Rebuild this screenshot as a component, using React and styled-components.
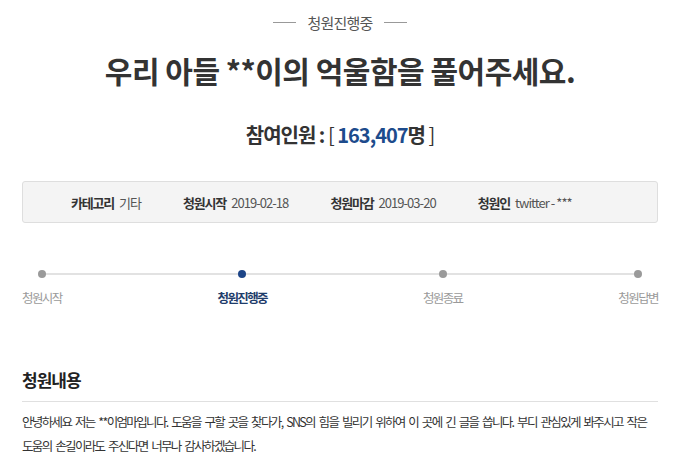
import React from 'react';
import styled, { createGlobalStyle } from 'styled-components';

const GlobalStyle = createGlobalStyle`
	body {
		margin: 0;
		background: #fff;
		font-family: "Noto Sans CJK KR", "Noto Sans", sans-serif;
		color: #333;
	}
`;

const steps = [
	{ label: '청원시작', active: false },
	{ label: '청원진행중', active: true },
	{ label: '청원종료', active: false },
	{ label: '청원답변', active: false }
];

const info = [
	{ label: '카테고리', value: '기타' },
	{ label: '청원시작', value: '2019-02-18' },
	{ label: '청원마감', value: '2019-03-20' },
	{ label: '청원인', value: 'twitter - ***' }
];

const App = () => {
	return (
		<Page>
			<GlobalStyle />

			<Status>
				<Dash />
				<span>청원진행중</span>
				<Dash />
			</Status>

			<Title>우리 아들 **이의 억울함을 풀어주세요.</Title>

			<Count>
				참여인원 : <Bracket>[</Bracket> <Number>163,407</Number>명 <Bracket>]</Bracket>
			</Count>

			<InfoBox>
				{info.map(item => (
					<InfoItem key={item.label}>
						<InfoLabel>{item.label}</InfoLabel>
						<InfoValue>{item.value}</InfoValue>
					</InfoItem>
				))}
			</InfoBox>

			<Progress>
				{steps.map(step => (
					<Step key={step.label}>
						<Dot active={step.active} />
						<StepLabel active={step.active}>{step.label}</StepLabel>
					</Step>
				))}
			</Progress>

			<Heading>청원내용</Heading>
			<Body>
				안녕하세요 저는 **이엄마입니다. 도움을 구할 곳을 찾다가, SNS의 힘을 빌리기 위하여 이 곳에 긴 글을 씁니다. 부디 관심있게 봐주시고 작은 도움의 손길이라도 주신다면 너무나 감사하겠습니다.
			</Body>
		</Page>
	);
};

export default App;

const Page = styled.div`
	padding: 0 22px;
	display: flex;
	flex-direction: column;
`

const Status = styled.div`
	margin-top: 12px;
	height: 20px;
	display: flex;
	justify-content: center;
	align-items: center;
	gap: 11px;
	font-size: 15px;
	letter-spacing: -0.8px;
	color: #555;
`

const Dash = styled.span`
	width: 23px;
	height: 1px;
	background: #999;
`

const Title = styled.h1`
	margin: 18px 0 0;
	height: 40px;
	line-height: 40px;
	text-align: center;
	font-size: 30px;
	font-weight: 700;
	letter-spacing: -0.5px;
	color: #333;
`

const Count = styled.div`
	margin-top: 31px;
	line-height: 28px;
	text-align: center;
	font-size: 20px;
	font-weight: 700;
	letter-spacing: -1px;
	color: #333;
`

const Bracket = styled.span`
	font-weight: 400;
`

const Number = styled.span`
	color: #1d4b8c;
`

const InfoBox = styled.div`
	margin-top: 32px;
	height: 42px;
	box-sizing: border-box;
	background: #f4f4f4;
	border: 1px solid #dedede;
	border-radius: 3px;
	display: flex;
	align-items: center;
	padding-left: 48px;
	gap: 42px;
`

const InfoItem = styled.div`
	display: flex;
	align-items: center;
	gap: 5px;
	font-size: 13px;
`

const InfoLabel = styled.span`
	font-weight: 700;
	letter-spacing: -1.2px;
	color: #333;
`

const InfoValue = styled.span`
	color: #555;
	letter-spacing: -0.95px;
`

const Progress = styled.div`
	position: relative;
	margin-top: 47px;
	display: flex;
	justify-content: space-between;

	&::before {
		content: '';
		position: absolute;
		top: 3px;
		left: 20px;
		right: 20px;
		height: 2px;
		background: #e2e2e2;
	}
`

const Step = styled.div`
	position: relative;
	display: flex;
	flex-direction: column;
	align-items: center;
	gap: 11px;
`

const Dot = styled.span`
	width: 8px;
	height: 8px;
	border-radius: 50%;
	background: ${props => props.active ? '#1d4587' : '#9a9a9a'};
`

const StepLabel = styled.span`
	line-height: 18px;
	font-size: 12.5px;
	letter-spacing: -1.6px;
	font-weight: ${props => props.active ? 700 : 400};
	color: ${props => props.active ? '#1f3d6b' : '#9a9a9a'};
`

const Heading = styled.h2`
	margin: 61px 0 0;
	padding-bottom: 9px;
	line-height: 24px;
	font-size: 17px;
	font-weight: 700;
	letter-spacing: -1px;
	color: #222;
	border-bottom: 1px solid #e0e0e0;
`

const Body = styled.p`
	margin: 8px 0 0;
	line-height: 24px;
	font-size: 12.5px;
	letter-spacing: -1.65px;
	word-spacing: 2.5px;
	word-break: keep-all;
	color: #333;
`
